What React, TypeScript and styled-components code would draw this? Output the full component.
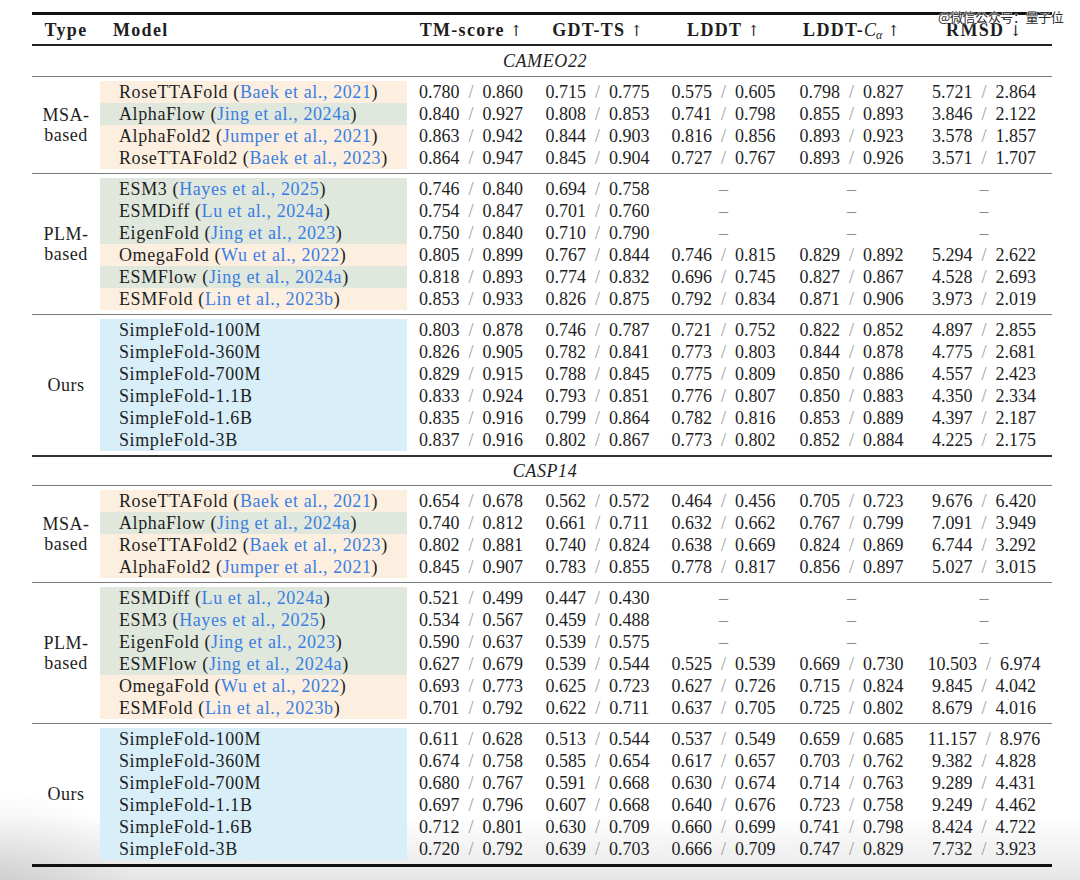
import React from "react";
import styled, { createGlobalStyle } from "styled-components";

const Global = createGlobalStyle`
  html, body { margin: 0; padding: 0; }
  body {
    width: 1080px;
    height: 880px;
    overflow: hidden;
    background:
      radial-gradient(ellipse 140px 90px at 0 880px, rgba(0,0,0,0.10), rgba(0,0,0,0) 100%),
      linear-gradient(to bottom, #ffffff 0, #ffffff 815px, #f2f2f2 850px, #e6e6e6 880px);
    font-family: "Liberation Serif", "Times New Roman", serif;
    color: #1e1e1e;
  }
`;

const Page = styled.div`
  position: relative;
  padding: 12px 0 0 32px;
`;

const Table = styled.div`
  width: 1020px;
  display: flex;
  flex-direction: column;
`;

const Rule = styled.div<{ $w: number; $c: string }>`
  height: ${(p) => p.$w}px;
  background: ${(p) => p.$c};
`;

const COLS = "68px 307px 128px 125px 127px 129px 136px";

const HeaderRow = styled.div`
  display: grid;
  grid-template-columns: ${COLS};
  height: 28px;
  align-items: center;
  font-size: 18px;
  font-weight: 700;
  letter-spacing: 1.3px;
  padding-top: 1px;
`;

const HeadCell = styled.div<{ $align?: string; $pad?: number }>`
  text-align: ${(p) => p.$align || "center"};
  padding-left: ${(p) => p.$pad || 0}px;
  white-space: nowrap;
`;

const Arrow = styled.span`
  font-weight: 400;
  font-family: "DejaVu Serif", serif;
  font-size: 15px;
  letter-spacing: 0;
  margin-left: 5px;
`;

const MathC = styled.span`
  font-style: italic;
  font-weight: 400;
  letter-spacing: 0;
`;

const Sub = styled.sub`
  font-style: italic;
  font-weight: 400;
  font-size: 12px;
  letter-spacing: 0;
  vertical-align: -3px;
  line-height: 0;
`;

const SectionTitle = styled.div<{ $h: number }>`
  height: ${(p) => p.$h}px;
  display: flex;
  align-items: center;
  justify-content: center;
  font-style: italic;
  font-size: 18px;
  letter-spacing: 0.6px;
  padding-left: 6px;
`;

const Group = styled.div`
  display: flex;
  padding: 4px 0;
`;

const TypeCell = styled.div`
  width: 68px;
  flex: none;
  display: flex;
  align-items: center;
  justify-content: center;
  text-align: center;
  font-size: 18px;
  line-height: 20px;
  letter-spacing: 0.5px;
`;

const Rows = styled.div`
  display: flex;
  flex-direction: column;
`;

const Row = styled.div`
  display: grid;
  grid-template-columns: 307px 128px 125px 127px 129px 136px;
  height: 22px;
  align-items: center;
  font-size: 18px;
  line-height: 22px;
`;

const bg: Record<string, string> = {
  p: "#fcefe0",
  g: "#e0e8dd",
  b: "#d8eef9",
};

const ModelCell = styled.div<{ $tone: string }>`
  height: 22px;
  background: ${(p) => bg[p.$tone]};
  padding-left: 19px;
  letter-spacing: 0.6px;
  white-space: nowrap;
`;

const Cite = styled.span`
  color: #3b7ee2;
`;

const Val = styled.div`
  text-align: center;
  white-space: nowrap;
`;

const Slash = styled.span`
  color: #9a9a9a;
  margin: 0 9px;
`;

const Dash = styled.span`
  color: #8a8a8a;
`;

const Watermark = styled.div`
  position: absolute;
  top: 9px;
  left: 938px;
  font-family: "Noto Sans CJK SC", sans-serif;
  font-size: 13px;
  line-height: 16px;
  color: #2a2a2a;
  letter-spacing: -0.4px;
  text-shadow: 0 0 2px #fff, 0 0 2px #fff, 0 0 1px #fff;
  white-space: nowrap;
`;

type R = [string, string | null, string, (string | null)[]];

const sections: { title: string; titleH: number; groups: { type: string[]; rows: R[] }[] }[] = [
  {
    title: "CAMEO22",
    titleH: 30,
    groups: [
      {
        type: ["MSA-", "based"],
        rows: [
          ["RoseTTAFold", "Baek et al., 2021", "p", ["0.780/0.860", "0.715/0.775", "0.575/0.605", "0.798/0.827", "5.721/2.864"]],
          ["AlphaFlow", "Jing et al., 2024a", "g", ["0.840/0.927", "0.808/0.853", "0.741/0.798", "0.855/0.893", "3.846/2.122"]],
          ["AlphaFold2", "Jumper et al., 2021", "p", ["0.863/0.942", "0.844/0.903", "0.816/0.856", "0.893/0.923", "3.578/1.857"]],
          ["RoseTTAFold2", "Baek et al., 2023", "p", ["0.864/0.947", "0.845/0.904", "0.727/0.767", "0.893/0.926", "3.571/1.707"]],
        ],
      },
      {
        type: ["PLM-", "based"],
        rows: [
          ["ESM3", "Hayes et al., 2025", "g", ["0.746/0.840", "0.694/0.758", null, null, null]],
          ["ESMDiff", "Lu et al., 2024a", "g", ["0.754/0.847", "0.701/0.760", null, null, null]],
          ["EigenFold", "Jing et al., 2023", "g", ["0.750/0.840", "0.710/0.790", null, null, null]],
          ["OmegaFold", "Wu et al., 2022", "p", ["0.805/0.899", "0.767/0.844", "0.746/0.815", "0.829/0.892", "5.294/2.622"]],
          ["ESMFlow", "Jing et al., 2024a", "g", ["0.818/0.893", "0.774/0.832", "0.696/0.745", "0.827/0.867", "4.528/2.693"]],
          ["ESMFold", "Lin et al., 2023b", "p", ["0.853/0.933", "0.826/0.875", "0.792/0.834", "0.871/0.906", "3.973/2.019"]],
        ],
      },
      {
        type: ["Ours"],
        rows: [
          ["SimpleFold-100M", null, "b", ["0.803/0.878", "0.746/0.787", "0.721/0.752", "0.822/0.852", "4.897/2.855"]],
          ["SimpleFold-360M", null, "b", ["0.826/0.905", "0.782/0.841", "0.773/0.803", "0.844/0.878", "4.775/2.681"]],
          ["SimpleFold-700M", null, "b", ["0.829/0.915", "0.788/0.845", "0.775/0.809", "0.850/0.886", "4.557/2.423"]],
          ["SimpleFold-1.1B", null, "b", ["0.833/0.924", "0.793/0.851", "0.776/0.807", "0.850/0.883", "4.350/2.334"]],
          ["SimpleFold-1.6B", null, "b", ["0.835/0.916", "0.799/0.864", "0.782/0.816", "0.853/0.889", "4.397/2.187"]],
          ["SimpleFold-3B", null, "b", ["0.837/0.916", "0.802/0.867", "0.773/0.802", "0.852/0.884", "4.225/2.175"]],
        ],
      },
    ],
  },
  {
    title: "CASP14",
    titleH: 28,
    groups: [
      {
        type: ["MSA-", "based"],
        rows: [
          ["RoseTTAFold", "Baek et al., 2021", "p", ["0.654/0.678", "0.562/0.572", "0.464/0.456", "0.705/0.723", "9.676/6.420"]],
          ["AlphaFlow", "Jing et al., 2024a", "g", ["0.740/0.812", "0.661/0.711", "0.632/0.662", "0.767/0.799", "7.091/3.949"]],
          ["RoseTTAFold2", "Baek et al., 2023", "p", ["0.802/0.881", "0.740/0.824", "0.638/0.669", "0.824/0.869", "6.744/3.292"]],
          ["AlphaFold2", "Jumper et al., 2021", "p", ["0.845/0.907", "0.783/0.855", "0.778/0.817", "0.856/0.897", "5.027/3.015"]],
        ],
      },
      {
        type: ["PLM-", "based"],
        rows: [
          ["ESMDiff", "Lu et al., 2024a", "g", ["0.521/0.499", "0.447/0.430", null, null, null]],
          ["ESM3", "Hayes et al., 2025", "g", ["0.534/0.567", "0.459/0.488", null, null, null]],
          ["EigenFold", "Jing et al., 2023", "g", ["0.590/0.637", "0.539/0.575", null, null, null]],
          ["ESMFlow", "Jing et al., 2024a", "g", ["0.627/0.679", "0.539/0.544", "0.525/0.539", "0.669/0.730", "10.503/6.974"]],
          ["OmegaFold", "Wu et al., 2022", "p", ["0.693/0.773", "0.625/0.723", "0.627/0.726", "0.715/0.824", "9.845/4.042"]],
          ["ESMFold", "Lin et al., 2023b", "p", ["0.701/0.792", "0.622/0.711", "0.637/0.705", "0.725/0.802", "8.679/4.016"]],
        ],
      },
      {
        type: ["Ours"],
        rows: [
          ["SimpleFold-100M", null, "b", ["0.611/0.628", "0.513/0.544", "0.537/0.549", "0.659/0.685", "11.157/8.976"]],
          ["SimpleFold-360M", null, "b", ["0.674/0.758", "0.585/0.654", "0.617/0.657", "0.703/0.762", "9.382/4.828"]],
          ["SimpleFold-700M", null, "b", ["0.680/0.767", "0.591/0.668", "0.630/0.674", "0.714/0.763", "9.289/4.431"]],
          ["SimpleFold-1.1B", null, "b", ["0.697/0.796", "0.607/0.668", "0.640/0.676", "0.723/0.758", "9.249/4.462"]],
          ["SimpleFold-1.6B", null, "b", ["0.712/0.801", "0.630/0.709", "0.660/0.699", "0.741/0.798", "8.424/4.722"]],
          ["SimpleFold-3B", null, "b", ["0.720/0.792", "0.639/0.703", "0.666/0.709", "0.747/0.829", "7.732/3.923"]],
        ],
      },
    ],
  },
];

const Value: React.FC<{ v: string | null }> = ({ v }) => {
  if (!v) return <Val><Dash>–</Dash></Val>;
  const [a, b] = v.split("/");
  return (
    <Val>
      {a}
      <Slash>/</Slash>
      {b}
    </Val>
  );
};

export default function App() {
  return (
    <>
      <Global />
      <Page>
        <Table>
          <Rule $w={3} $c="#111" />
          <HeaderRow>
            <HeadCell>Type</HeadCell>
            <HeadCell $align="left" $pad={13}>Model</HeadCell>
            <HeadCell>TM-score<Arrow>↑</Arrow></HeadCell>
            <HeadCell>GDT-TS<Arrow>↑</Arrow></HeadCell>
            <HeadCell>LDDT<Arrow>↑</Arrow></HeadCell>
            <HeadCell>
              LDDT-<MathC>C</MathC><Sub>α</Sub><Arrow>↑</Arrow>
            </HeadCell>
            <HeadCell>RMSD<Arrow>↓</Arrow></HeadCell>
          </HeaderRow>
          <Rule $w={2} $c="#222" />
          {sections.map((s, si) => (
            <React.Fragment key={s.title}>
              {si > 0 && <Rule $w={2} $c="#333" />}
              <SectionTitle $h={s.titleH}>{s.title}</SectionTitle>
              {s.groups.map((g, gi) => (
                <React.Fragment key={gi}>
                  <Rule $w={1} $c="#7a7a7a" />
                  <Group>
                    <TypeCell>
                      <div>
                        {g.type.map((t) => (
                          <div key={t}>{t}</div>
                        ))}
                      </div>
                    </TypeCell>
                    <Rows>
                      {g.rows.map((r, ri) => (
                        <Row key={ri}>
                          <ModelCell $tone={r[2]}>
                            {r[0]}
                            {r[1] && (
                              <>
                                {" ("}
                                <Cite>{r[1]}</Cite>
                                {")"}
                              </>
                            )}
                          </ModelCell>
                          {r[3].map((v, vi) => (
                            <Value key={vi} v={v} />
                          ))}
                        </Row>
                      ))}
                    </Rows>
                  </Group>
                </React.Fragment>
              ))}
            </React.Fragment>
          ))}
          <Rule $w={3} $c="#111" />
        </Table>
        <Watermark>@微信公众号：量子位</Watermark>
      </Page>
    </>
  );
}
